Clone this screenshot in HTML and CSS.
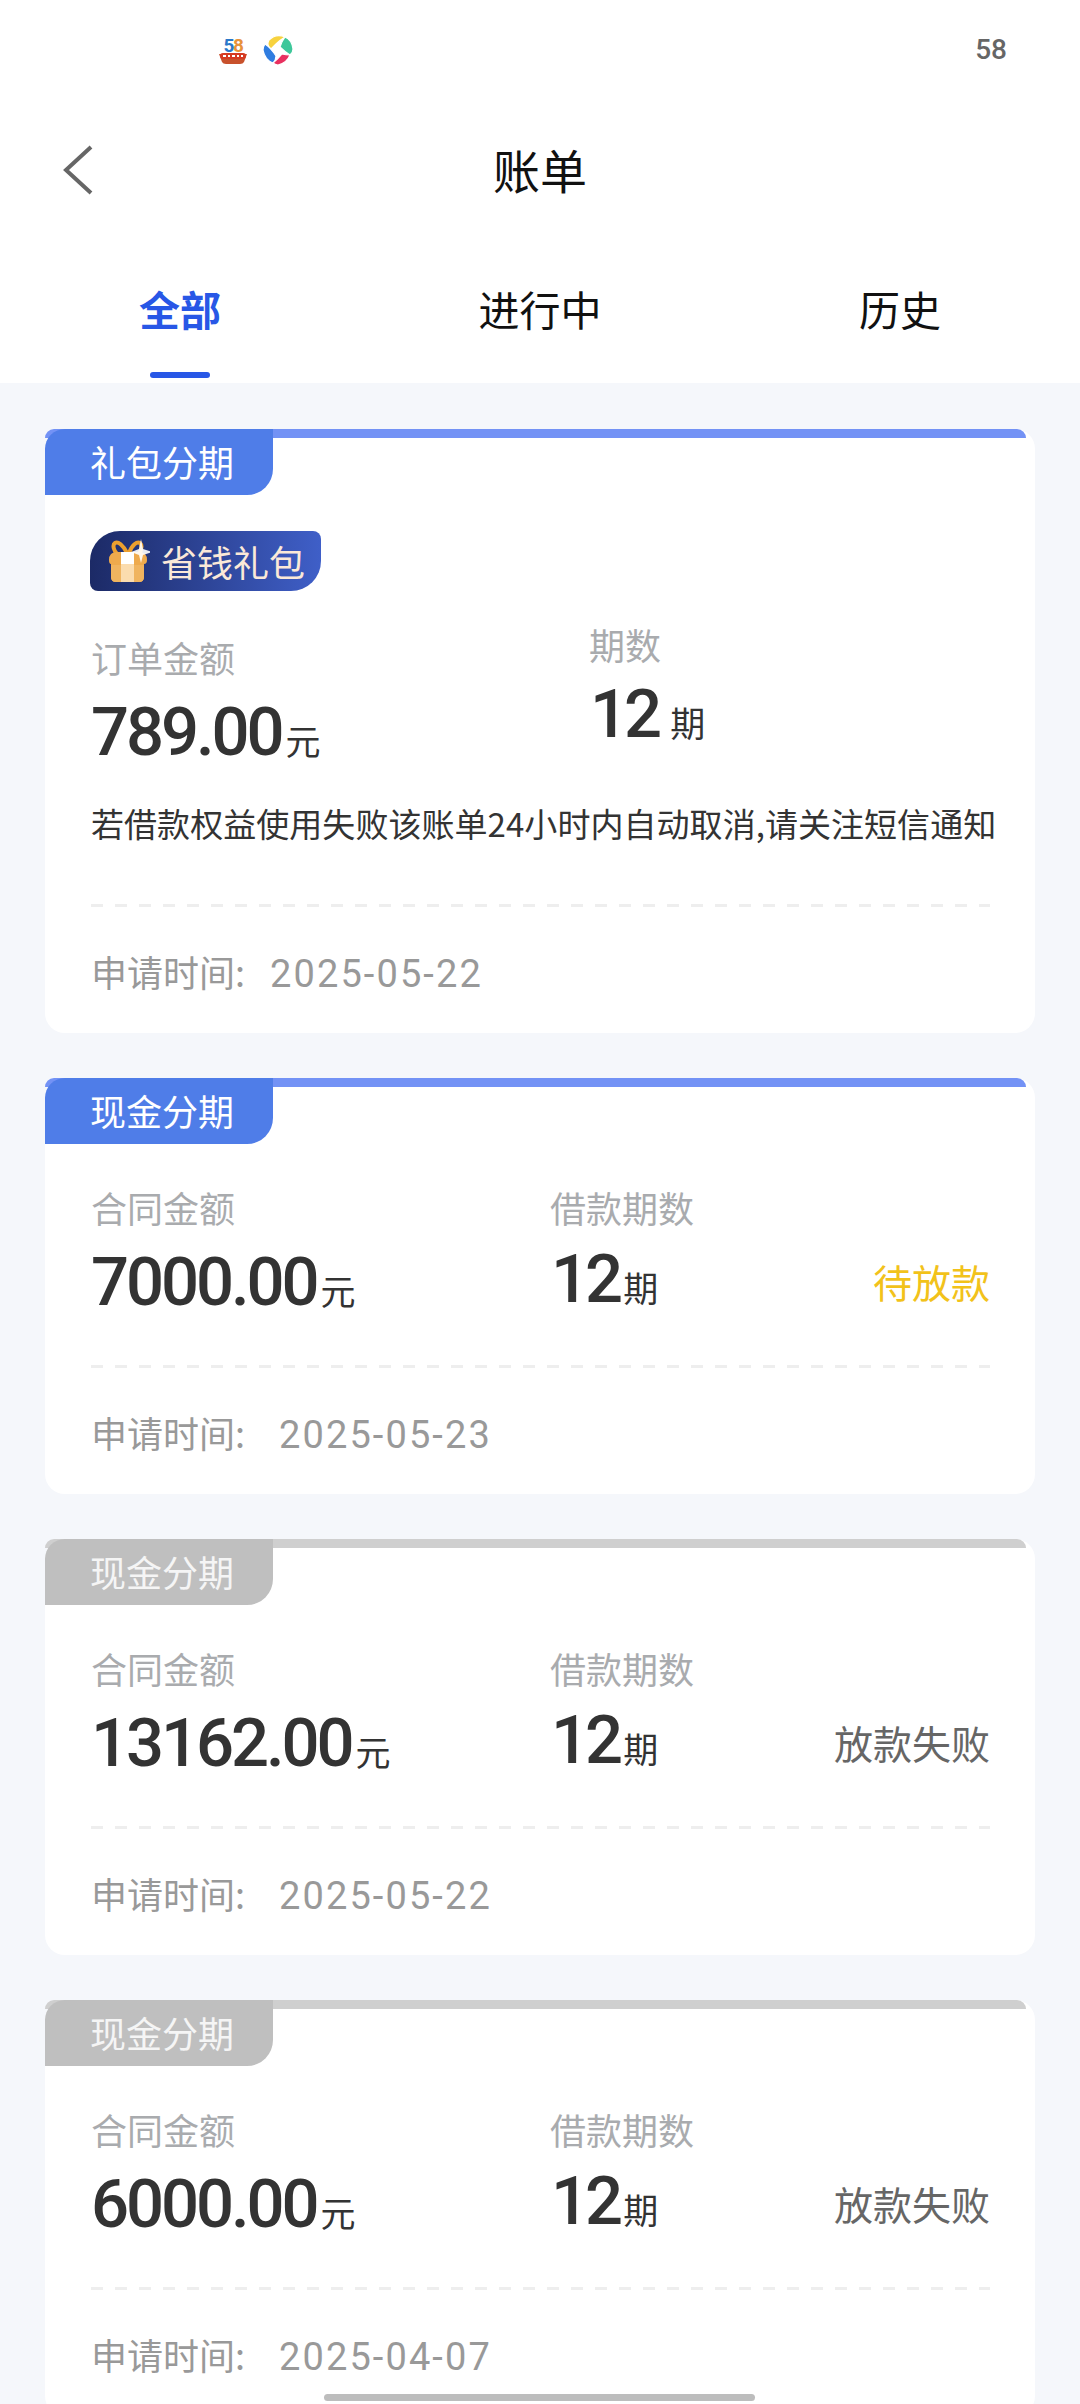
FILE: index.html
```html
<!DOCTYPE html>
<html lang="zh-CN">
<head>
<meta charset="utf-8">
<title>账单</title>
<link rel="stylesheet" href="styles.css">
</head>
<body>
<div class="page">
  <header class="top">
    <div class="status">
      <div class="status-icons">
        <svg class="app-icon" viewBox="0 0 30 30" width="30" height="30">
          <path d="M1 19 H29 L26 27 Q25 29 22 29 H8 Q5 29 4 27 Z" fill="#c8512c"/>
          <rect x="2" y="18" width="26" height="6" rx="3" fill="#d63a22"/>
          <path d="M5 21h3M10 21h2M14 21h3M19 21h2M23 21h2" stroke="#fff" stroke-width="2"/>
          <text x="5.5" y="17" class="logo-five">5</text>
          <text x="15" y="17" class="logo-eight">8</text>
        </svg>
        <svg class="app-icon" viewBox="0 0 30 30" width="30" height="30">
          <g stroke="#fff" stroke-width="1.2">
            <path d="M6 5 Q13 -2 22 2 Q17 5 13 9 Q10 12 8 14 Q3 11 6 5Z" fill="#f7d23e"/>
            <path d="M22 2 Q29 5 30 14 Q30 18 27 20 Q22 17 17 12 Q19 6 22 2Z" fill="#3ec79a"/>
            <path d="M27 20 Q24 28 15 30 Q12 30 10 28 Q15 24 19 19 Q23 20 27 20Z" fill="#e8305f"/>
            <path d="M2 9 Q8 13 13 21 Q13 25 10 28 Q2 25 0 15 Q0 12 2 9Z" fill="#2f7de0"/>
          </g>
        </svg>
      </div>
      <span class="status-num">58</span>
    </div>
    <div class="navbar">
      <svg class="back" viewBox="0 0 30 50" width="30" height="50">
        <path d="M28 2 L3 25 L28 48" fill="none" stroke="#666" stroke-width="4"/>
      </svg>
      <h1 class="title">账单</h1>
    </div>
    <nav class="tabs">
      <div class="tab tab-active">全部<i class="tab-line"></i></div>
      <div class="tab">进行中</div>
      <div class="tab">历史</div>
    </nav>
  </header>

  <main class="list">
    <section class="card card-gift">
      <div class="strip"></div>
      <div class="tag">礼包分期</div>
      <div class="gift-badge">
        <svg class="gift-icon" viewBox="0 0 44 44" width="44" height="44">
          <path d="M21 14 C17 6 12 2 9 4 C6 6 8 12 11 15" fill="none" stroke="#eda02e" stroke-width="4"/>
          <path d="M23 14 C26 6 31 2 34 4 C36 6 36 10 33 15" fill="none" stroke="#eda02e" stroke-width="4"/>
          <path d="M3 21 Q3 13 11 13 H33 Q41 13 41 21 Q41 25 38 25 V38 Q38 43 33 43 H10 Q5 43 5 38 V25 Q3 25 3 21Z" fill="#eeaa4d"/>
          <path d="M5 26 H38 V38 Q38 43 33 43 H10 Q5 43 5 38Z" fill="#f0b45f"/>
          <rect x="15" y="13" width="13" height="12" fill="#fff"/>
          <rect x="15" y="25" width="13" height="18" fill="#fbdcae"/>
          <path d="M35 0 L37 10 L46 13 L37 16 L35 24 L33 16 L25 13 L33 10Z" fill="#fff" opacity=".9"/>
        </svg>
        <span>省钱礼包</span>
      </div>
      <div class="row row-gift">
        <div class="col col-amount">
          <div class="label">订单金额</div>
          <div class="value"><b class="num">789.00</b><span class="unit">元</span></div>
        </div>
        <div class="col col-term-gift">
          <div class="label">期数</div>
          <div class="value"><b class="num num-term">12</b><span class="unit unit-gap">期</span></div>
        </div>
      </div>
      <p class="notice">若借款权益使用失败该账单24小时内自动取消,请关注短信通知</p>
      <div class="dash dash-gift"></div>
      <div class="date date-tight"><span class="date-label">申请时间:</span><span class="date-num">2025-05-22</span></div>
    </section>

    <section class="card">
      <div class="strip"></div>
      <div class="tag">现金分期</div>
      <div class="row">
        <div class="col col-amount">
          <div class="label">合同金额</div>
          <div class="value"><b class="num">7000.00</b><span class="unit">元</span></div>
        </div>
        <div class="col col-term">
          <div class="label">借款期数</div>
          <div class="value"><b class="num num-term">12</b><span class="unit">期</span></div>
        </div>
        <div class="state state-wait">待放款</div>
      </div>
      <div class="dash"></div>
      <div class="date"><span class="date-label">申请时间:</span><span class="date-num">2025-05-23</span></div>
    </section>

    <section class="card card-off">
      <div class="strip"></div>
      <div class="tag">现金分期</div>
      <div class="row">
        <div class="col col-amount">
          <div class="label">合同金额</div>
          <div class="value"><b class="num">13162.00</b><span class="unit">元</span></div>
        </div>
        <div class="col col-term">
          <div class="label">借款期数</div>
          <div class="value"><b class="num num-term">12</b><span class="unit">期</span></div>
        </div>
        <div class="state">放款失败</div>
      </div>
      <div class="dash"></div>
      <div class="date"><span class="date-label">申请时间:</span><span class="date-num">2025-05-22</span></div>
    </section>

    <section class="card card-off">
      <div class="strip"></div>
      <div class="tag">现金分期</div>
      <div class="row">
        <div class="col col-amount">
          <div class="label">合同金额</div>
          <div class="value"><b class="num">6000.00</b><span class="unit">元</span></div>
        </div>
        <div class="col col-term">
          <div class="label">借款期数</div>
          <div class="value"><b class="num num-term">12</b><span class="unit">期</span></div>
        </div>
        <div class="state">放款失败</div>
      </div>
      <div class="dash"></div>
      <div class="date"><span class="date-label">申请时间:</span><span class="date-num">2025-04-07</span></div>
    </section>
  </main>
  <div class="home-bar"></div>
</div>
</body>
</html>
```
FILE: styles.css
```css
* { box-sizing: border-box; }
html, body { margin: 0; padding: 0; }
body {
  font-family: "Noto Sans CJK SC", "Noto Sans", sans-serif;
  background: #f5f7fb;
  color: #333;
}
.page {
  position: relative;
  width: 1080px;
  height: 2404px;
  overflow: hidden;
  background: #f5f7fb;
}
.top { background: #fff; height: 383px; }
.status {
  height: 100px;
  display: flex;
  align-items: center;
  justify-content: space-between;
  padding: 0 73px 0 218px;
}
.status-icons { display: flex; gap: 15px; }
.app-icon { display: block; }
.logo-five, .logo-eight { font: 700 19px "Roboto", sans-serif; }
.logo-five { fill: #2b78c9; }
.logo-eight { fill: #e8923a; }
.status-num {
  font: 500 28px/30px "Roboto", sans-serif;
  color: #666;
}
.navbar {
  position: relative;
  height: 146px;
  display: flex;
  align-items: center;
  justify-content: center;
}
.back { position: absolute; left: 63px; top: 45px; }
.title {
  margin: 0;
  font-size: 47px;
  font-weight: 400;
  line-height: 60px;
  color: #111;
  position: relative;
  top: -4px;
}
.tabs { display: flex; }
.tab {
  position: relative;
  flex: 1;
  padding-top: 32px;
  text-align: center;
  font-size: 41px;
  line-height: 60px;
  color: #111;
}
.tab-active { color: #2857e6; font-weight: 700; }
.tab-line {
  position: absolute;
  left: 150px;
  top: 126px;
  width: 60px;
  height: 6px;
  border-radius: 3px;
  background: #2857e6;
}
.list {
  display: flex;
  flex-direction: column;
  gap: 45px;
  padding: 46px 45px 0;
}
.card {
  position: relative;
  height: 416px;
  flex: none;
  background: #fff;
  border-radius: 20px;
  padding: 0 45px 0 46px;
}
.card-gift { height: 604px; }
.strip {
  height: 9px;
  margin: 0 -36px 0 -46px;
  background: #7392f5;
  border-radius: 18px 18px 0 0;
}
.tag {
  position: absolute;
  left: 0;
  top: 0;
  width: 228px;
  height: 66px;
  padding-left: 45px;
  background: #4f7de8;
  border-radius: 20px 0 26px 0;
  color: #fff;
  font-size: 36px;
  line-height: 64px;
}
.card-off .strip { background: #cfcfcf; }
.card-off .tag { background: #bfbfbf; color: #f5f5f5; }
.gift-badge {
  display: flex;
  align-items: center;
  width: 231px;
  height: 60px;
  margin-top: 93px;
  margin-left: -1px;
  padding-left: 16px;
  gap: 11px;
  border-radius: 30px 8px 30px 8px;
  background: linear-gradient(90deg, #1c2a66, #3f5fc8);
  color: #fbe9d8;
  font-size: 36px;
  line-height: 58px;
}
.gift-icon { display: block; flex: none; }
.row {
  display: flex;
  align-items: flex-end;
  height: 172px;
  margin-top: 61px;
}
.row-gift {
  margin-top: 40px;
  align-items: flex-start;
  height: 167px;
}
.col-amount { width: 459px; }
.col-term { padding-bottom: 3px; }
.col-term .value { margin-top: 8px; }
.col-term-gift { margin-top: -13px; margin-left: 39px; }
.col-term-gift .value { margin-top: 6px; }
.label {
  font-size: 36px;
  line-height: 52px;
  color: #a9abae;
}
.value {
  display: flex;
  align-items: baseline;
  margin-top: 11px;
  height: 76px;
  line-height: 76px;
}
.num {
  font: 500 67px/76px "Roboto", sans-serif;
  letter-spacing: -3.1px;
  color: #333;
}
.num-term { letter-spacing: -4px; margin-left: 1px; }
.unit {
  margin-left: 4px;
  font-size: 35px;
  line-height: 40px;
  color: #333;
}
.unit-gap { margin-left: 12px; }
.state {
  margin-left: auto;
  padding-bottom: 9px;
  font-size: 39px;
  line-height: 60px;
  color: #666;
}
.state-wait { color: #f2c21a; }
.notice {
  margin: 0;
  font-size: 33px;
  line-height: 50px;
  white-space: nowrap;
  letter-spacing: .05px;
  color: #333;
}
.dash {
  height: 3px;
  margin-top: 45px;
  background: repeating-linear-gradient(90deg, #eeeeee 0 12px, transparent 12px 24px);
}
.dash-gift { margin-top: 56px; }
.date {
  display: flex;
  align-items: baseline;
  gap: 34px;
  margin-top: 34px;
  height: 60px;
  font-size: 36px;
  line-height: 60px;
  color: #999;
}
.date-tight { gap: 25px; }
.date-num {
  font: 400 38px/60px "Roboto", sans-serif;
  letter-spacing: 2.1px;
}
.home-bar {
  position: absolute;
  left: 324px;
  top: 2394px;
  width: 431px;
  height: 7px;
  border-radius: 4px;
  background: #bdbdbd;
}
```
